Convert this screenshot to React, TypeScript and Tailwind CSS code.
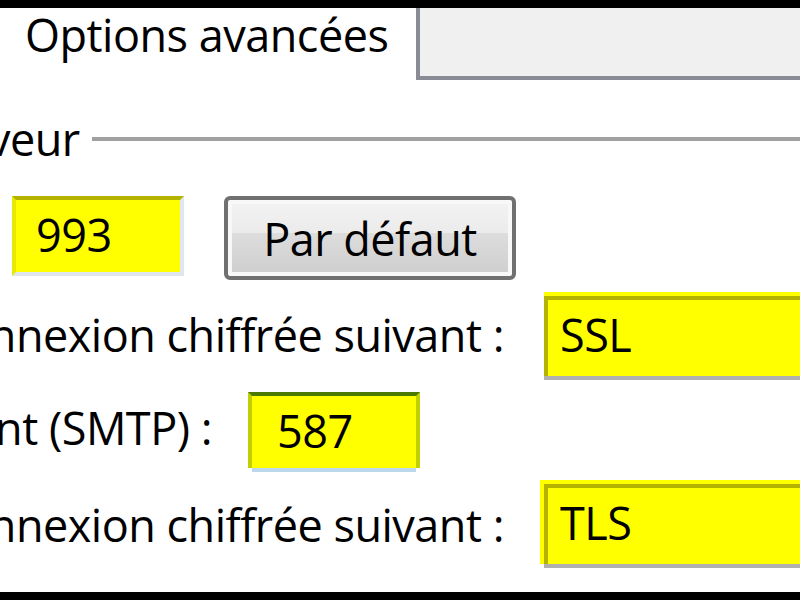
export default function App() {
  return (
    <div className="w-[800px] h-[600px] overflow-hidden bg-white flex flex-col text-black text-[45px] leading-[45px] tracking-[-0.5px] font-['Open_Sans','Noto_Sans',sans-serif]">
      <div className="h-[8px] bg-black shrink-0" />
      <div className="h-[72px] flex shrink-0">
        <div className="w-[416px] pl-[25px] pt-[4px] whitespace-nowrap">Options avancées</div>
        <div className="flex-1 bg-[#f0f0f0] border-l-4 border-b-4 border-[#898c95]" />
      </div>
      <div className="mt-[36px] h-[45px] flex items-center shrink-0">
        <div className="w-[92px] shrink-0 whitespace-nowrap">
          <span className="-ml-[12px] inline-block">veur</span>
        </div>
        <div className="flex-1 h-[4px] bg-[#a0a0a0]" />
      </div>
      <div className="mt-[35px] h-[84px] flex items-start shrink-0">
        <div className="ml-[12px] w-[172px] h-[80px] bg-[#ffff00] border-l-4 border-t-4 border-r-4 border-b-4 border-l-[#e8e800] border-t-[#b4b400] border-r-[#e0e6ee] border-b-[#e0e6ee] pl-[20px] pt-[12px]">
          993
        </div>
        <div className="ml-[40px] w-[292px] h-[84px] rounded-[6px] border-4 border-[#707070] bg-[#f8f8f8] p-[4px]">
          <div className="h-full w-full flex items-center justify-center bg-[linear-gradient(to_bottom,#f2f2f2_0%,#ebebeb_43%,#dddddd_43%,#cfcfcf_100%)]">
            Par défaut
          </div>
        </div>
      </div>
      <div className="mt-[12px] h-[88px] flex shrink-0">
        <div className="w-[504px] shrink-0 overflow-hidden flex justify-end pt-[20px]">
          <span className="whitespace-nowrap shrink-0">Utiliser le type de connexion chiffrée suivant :</span>
        </div>
        <div className="ml-[40px] flex-1 flex flex-col">
          <div className="bg-[#ffff00] pt-[4px]">
            <div className="h-[80px] border-t-4 border-l-4 border-[#b4b400] bg-[#ffff00] pl-[12px] pt-[12px]">SSL</div>
          </div>
          <div className="h-[4px] bg-[#b0b0b0]" />
        </div>
      </div>
      <div className="mt-[12px] h-[80px] flex shrink-0">
        <div className="w-[212px] shrink-0 overflow-hidden flex justify-end pt-[13px]">
          <span className="whitespace-nowrap shrink-0">Serveur sortant (SMTP) :</span>
        </div>
        <div className="ml-[36px] w-[172px] flex flex-col">
          <div className="h-[76px] bg-[#ffff00] border-t-4 border-l-4 border-r-4 border-t-[#4a7a00] border-l-[#c0d000] border-r-[#c0d000] pl-[25px] pt-[12px]">
            587
          </div>
          <div className="mx-[4px] h-[4px] bg-[#bcd8ec]" />
        </div>
      </div>
      <div className="mt-[8px] h-[88px] flex shrink-0">
        <div className="w-[504px] shrink-0 overflow-hidden flex justify-end pt-[22px]">
          <span className="whitespace-nowrap shrink-0">Utiliser le type de connexion chiffrée suivant :</span>
        </div>
        <div className="ml-[36px] flex-1 flex flex-col">
          <div className="bg-[#ffff00] pt-[4px] pl-[4px]">
            <div className="h-[80px] border-t-4 border-l-4 border-[#b4b400] bg-[#ffff00] pl-[12px] pt-[12px]">TLS</div>
          </div>
          <div className="ml-[4px] h-[4px] bg-[#b0b0b0]" />
        </div>
      </div>
      <div className="flex-1" />
      <div className="h-[8px] bg-black shrink-0" />
    </div>
  );
}
